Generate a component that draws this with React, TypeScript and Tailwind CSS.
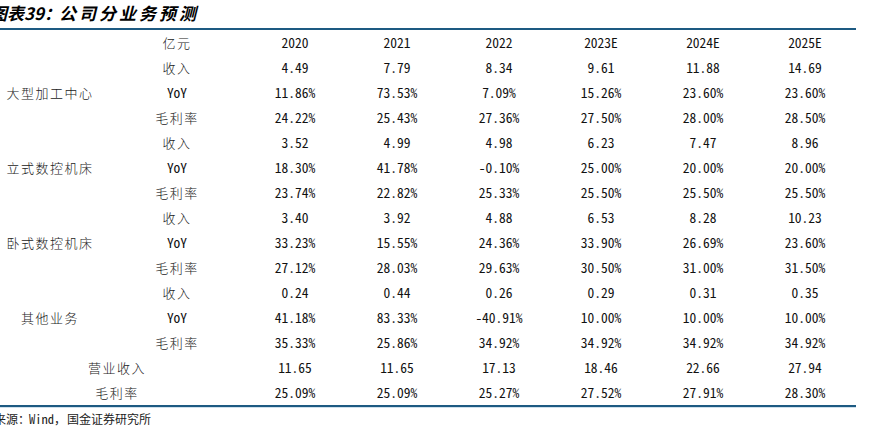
import React from "react";

type Row = [string, string[]];
type Group = { cat: string; rows: Row[] };

const groups: Group[] = [
  {
    cat: "大型加工中心",
    rows: [
      ["收入", ["4.49", "7.79", "8.34", "9.61", "11.88", "14.69"]],
      ["YoY", ["11.86%", "73.53%", "7.09%", "15.26%", "23.60%", "23.60%"]],
      ["毛利率", ["24.22%", "25.43%", "27.36%", "27.50%", "28.00%", "28.50%"]],
    ],
  },
  {
    cat: "立式数控机床",
    rows: [
      ["收入", ["3.52", "4.99", "4.98", "6.23", "7.47", "8.96"]],
      ["YoY", ["18.30%", "41.78%", "-0.10%", "25.00%", "20.00%", "20.00%"]],
      ["毛利率", ["23.74%", "22.82%", "25.33%", "25.50%", "25.50%", "25.50%"]],
    ],
  },
  {
    cat: "卧式数控机床",
    rows: [
      ["收入", ["3.40", "3.92", "4.88", "6.53", "8.28", "10.23"]],
      ["YoY", ["33.23%", "15.55%", "24.36%", "33.90%", "26.69%", "23.60%"]],
      ["毛利率", ["27.12%", "28.03%", "29.63%", "30.50%", "31.00%", "31.50%"]],
    ],
  },
  {
    cat: "其他业务",
    rows: [
      ["收入", ["0.24", "0.44", "0.26", "0.29", "0.31", "0.35"]],
      ["YoY", ["41.18%", "83.33%", "-40.91%", "10.00%", "10.00%", "10.00%"]],
      ["毛利率", ["35.33%", "25.86%", "34.92%", "34.92%", "34.92%", "34.92%"]],
    ],
  },
];

const totals: Row[] = [
  ["营业收入", ["11.65", "11.65", "17.13", "18.46", "22.66", "27.94"]],
  ["毛利率", ["25.09%", "25.09%", "25.27%", "27.52%", "27.91%", "28.30%"]],
];

const years = ["2020", "2021", "2022", "2023E", "2024E", "2025E"];

const num =
  "h-[25px] flex items-center justify-center text-[13.5px] text-[#111] font-['Noto_Sans_Mono_CJK_SC','Noto_Sans_CJK_SC',monospace] whitespace-pre";
const cn =
  "h-[25px] flex items-center justify-center text-[13px] tracking-[1.5px] text-[#222] font-light font-['Noto_Sans_CJK_SC',sans-serif]";

function Label({ t }: { t: string }) {
  if (t === "YoY") return <div className={num}>{t}</div>;
  return <div className={cn}>{t}</div>;
}

export default function App() {
  return (
    <div className="w-[874px] h-[428px] bg-white overflow-hidden">
      <div className="ml-[-10px] w-[866px]">
        <div className="h-[28px] pl-[0px] pt-[3px] text-[17px] leading-[20px] font-bold italic text-black font-['Noto_Sans_CJK_SC',sans-serif] whitespace-nowrap">
          <span className="tracking-[0px]">图表39</span>
          <span className="tracking-[-2px]">：</span>
          <span className="tracking-[3px]">公司分业务预测</span>
        </div>
        <div className="border-t-2 border-[#1d5a82] border-b-2">
          <div className="grid grid-cols-[120px_134px_repeat(6,102px)]">
            <div className="h-[25px]" />
            <div className={cn}>亿元</div>
            {years.map((y) => (
              <div key={y} className={num}>
                {y}
              </div>
            ))}
            {groups.map((g) => (
              <React.Fragment key={g.cat}>
                <div className="row-span-3 flex items-center justify-center text-[13px] tracking-[1.5px] text-[#222] font-light font-['Noto_Sans_CJK_SC',sans-serif]">
                  {g.cat}
                </div>
                {g.rows.map(([label, vals]) => (
                  <React.Fragment key={label}>
                    <Label t={label} />
                    {vals.map((v, i) => (
                      <div key={i} className={num}>
                        {v}
                      </div>
                    ))}
                  </React.Fragment>
                ))}
              </React.Fragment>
            ))}
            {totals.map(([label, vals]) => (
              <React.Fragment key={label}>
                <div className={cn + " col-span-2"}>{label}</div>
                {vals.map((v, i) => (
                  <div key={i} className={num}>
                    {v}
                  </div>
                ))}
              </React.Fragment>
            ))}
          </div>
        </div>
        <div className="h-[1px] bg-[#cfe0ec]" />
        <div className="pl-[4px] pt-[3px] text-[12px] leading-[16px] text-[#222] font-light font-['Noto_Sans_Mono_CJK_SC','Noto_Sans_CJK_SC',monospace] whitespace-nowrap">
          <span>来源</span>
          <span className="tracking-[-1px]">：</span>
          <span className="text-[12.5px]">Wind</span>
          <span className="tracking-[1px]">，</span>
          <span>国金证券研究所</span>
        </div>
      </div>
    </div>
  );
}
